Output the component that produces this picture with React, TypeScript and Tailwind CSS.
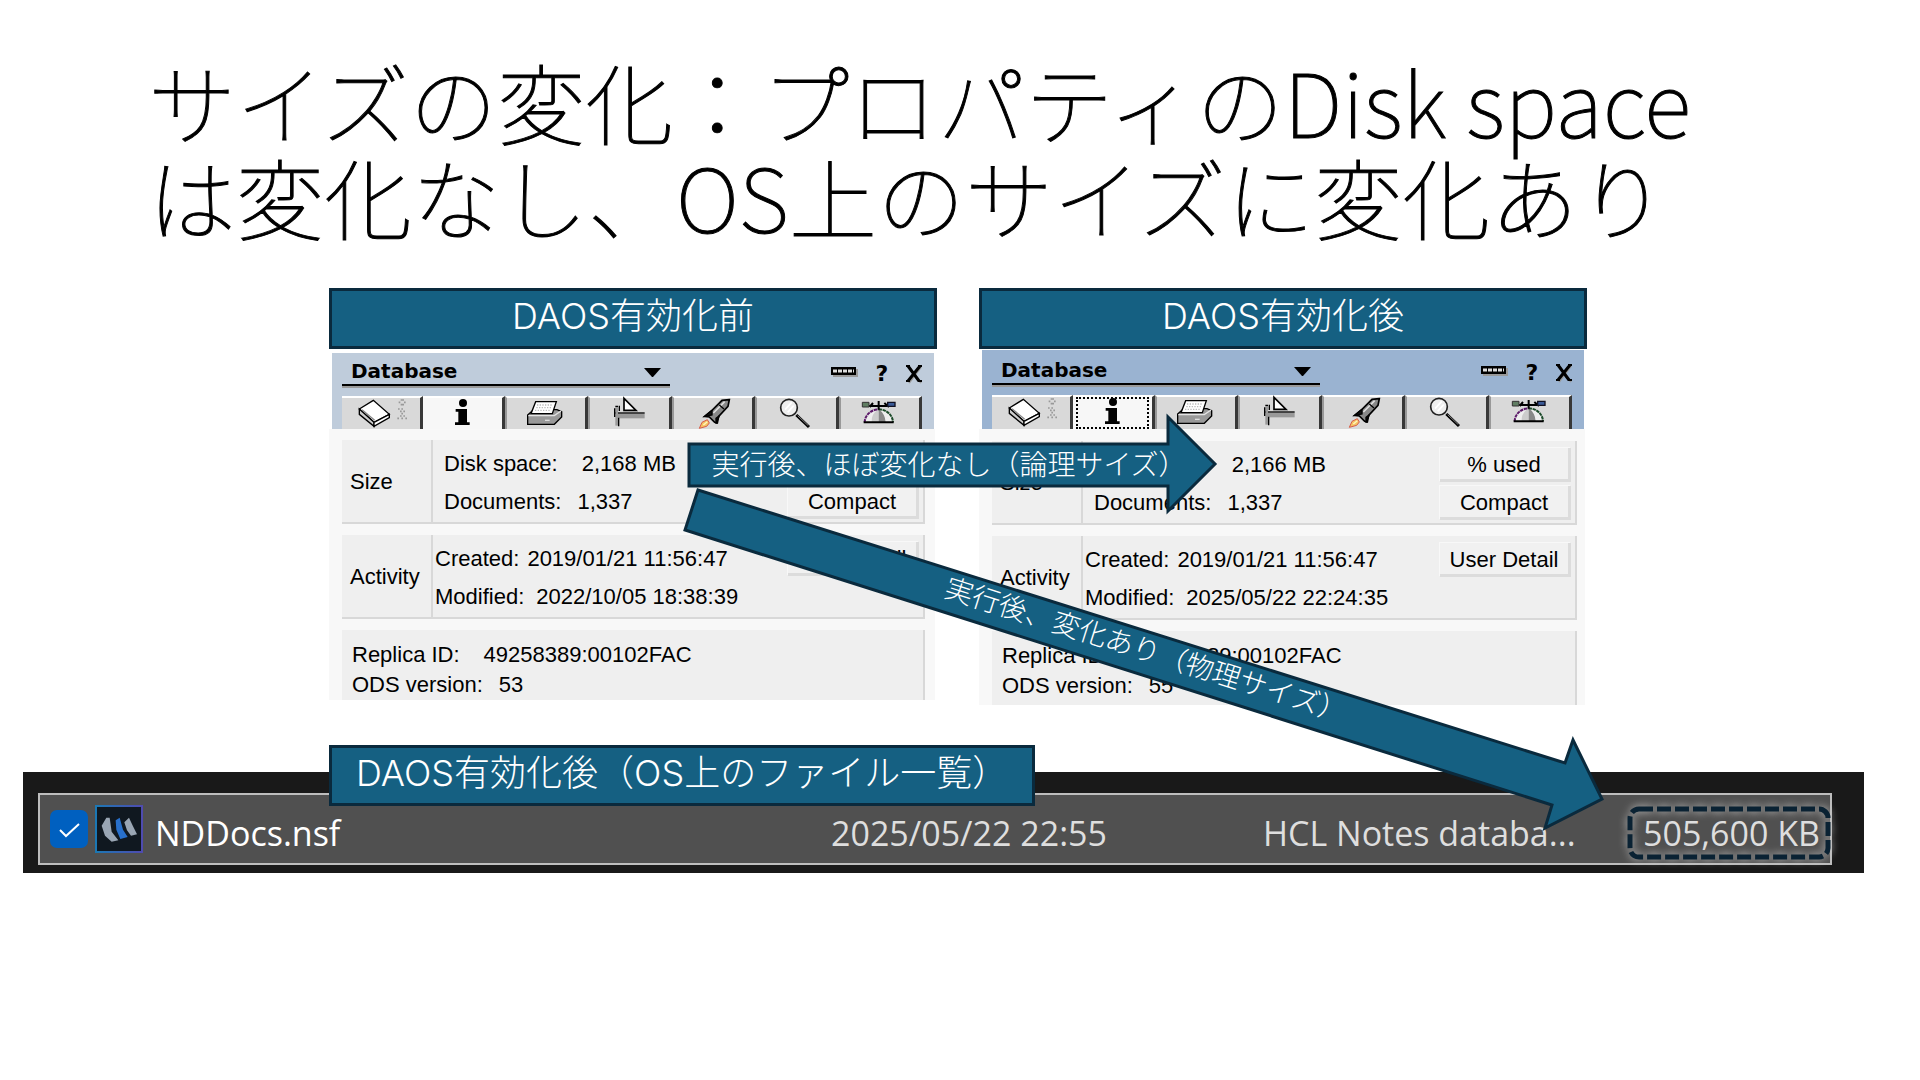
import React from 'react';

interface PropertyBoxData {
  id: string;
  heading: string;
  focused: boolean;
  diskSpace: string;
  modified: string;
  odsVersion: string;
}

const boxes: PropertyBoxData[] = [
  {
    id: 'before',
    heading: 'DAOS有効化前',
    focused: false,
    diskSpace: '2,168 MB',
    modified: '2022/10/05 18:38:39',
    odsVersion: '53'
  },
  {
    id: 'after',
    heading: 'DAOS有効化後',
    focused: true,
    diskSpace: '2,166 MB',
    modified: '2025/05/22 22:24:35',
    odsVersion: '55'
  }
];

const tabs = [
  {
    name: 'General',
    icon: (
      <>
        <path d="M52 42 L94 16 L142 58 L96 82 Z" fill="#fff" stroke="#000" strokeWidth="4" />
        <path d="M52 42 L52 58 L96 94 L96 82 Z" fill="#ccc" stroke="#000" strokeWidth="4" />
        <path d="M96 82 L96 94 L142 68 L142 58 Z" fill="#fff" stroke="#000" strokeWidth="4" />
        <path d="M60 44 L98 76" stroke="#888" strokeWidth="4" />
        <path d="M176 15h10M170 22h5M186 22h5M176 29h10M168 42h5M178 42h5M174 49h5M184 49h5M178 56h5M174 63h5M184 63h5M166 70h5M178 70h5M190 70h5" stroke="#999" strokeWidth="5" />
      </>
    )
  },
  {
    name: 'Info',
    icon: (
      <>
        <circle cx="120" cy="24" r="12" />
        <path d="M98 42 H132 V82 H140 V90 H96 V82 H106 V50 H98 Z" />
      </>
    )
  },
  {
    name: 'Printing',
    icon: (
      <>
        <path d="M62 60 L80 44 L150 44 L164 50 L164 66 L142 88 L62 88 Z" fill="#999" stroke="#000" strokeWidth="4" />
        <path d="M86 20 L148 20 L136 56 L72 56 Z" fill="#fff" stroke="#000" strokeWidth="4" />
        <path d="M90 30h48M88 38h46M84 46h48" stroke="#bbb" strokeWidth="4" strokeDasharray="4 4" />
        <path d="M64 62 H142 L162 48" fill="none" stroke="#e4e4e4" strokeWidth="4" />
        <path d="M114 76h14" stroke="#ddd" strokeWidth="4" />
      </>
    )
  },
  {
    name: 'Design',
    icon: (
      <>
        <path d="M102 10 L138 46 L102 46 Z" fill="#fff" stroke="#000" strokeWidth="5" />
        <path d="M84 56h80v14H84z" fill="#999" />
        <path d="M72 54h92" stroke="#000" strokeWidth="4" />
        <path d="M80 36v56" stroke="#999" strokeWidth="8" />
        <path d="M88 32v16M86 68v26M74 40v26M84 34h-8" fill="none" stroke="#000" strokeWidth="4" />
      </>
    )
  },
  {
    name: 'Launch',
    icon: (
      <>
        <path d="M166 14 L144 16 L112 48 L92 64 L106 66 L122 82 L130 84 L134 64 L162 34 Z" fill="#888" stroke="#000" strokeWidth="5" />
        <path d="M152 20 L118 54" stroke="#ddd" strokeWidth="5" />
        <path d="M136 30l14 12M92 64l22-18v14zM126 86l10-24-10 8z" fill="#111" stroke="#000" strokeWidth="4" />
        <path d="M76 100 L84 82 L100 74 L106 84 L98 94 Z" fill="#f5c463" stroke="#d65a4a" strokeWidth="3" />
        <path d="M88 90l12-10" stroke="#fff6c0" strokeWidth="4" />
      </>
    )
  },
  {
    name: 'Search',
    icon: (
      <>
        <circle cx="96" cy="38" r="25" fill="#eee" stroke="#222" strokeWidth="5" />
        <path d="M84 44l20-22M92 52l18-20" stroke="#fff" strokeWidth="5" />
        <path d="M118 60 L156 96" stroke="#000" strokeWidth="9" />
        <path d="M122 62 L154 92" stroke="#888" strokeWidth="3" />
      </>
    )
  },
  {
    name: 'Advanced',
    icon: (
      <>
        <path d="M70 84 A43 42 0 0 1 156 84 Z" fill="#eee" />
        <path d="M113 43 A43 42 0 0 0 92 82 H113 Z" fill="#ccc" />
        <path d="M113 43 Q132 56 134 82 H113 Z" fill="#888" />
        <path d="M71 82 A43 40 0 0 1 113 43" fill="none" stroke="#5b1a68" strokeWidth="6" strokeDasharray="10 2" />
        <path d="M113 43 A43 40 0 0 1 156 82" fill="none" stroke="#1c4b2a" strokeWidth="6" strokeDasharray="10 2" />
        <path d="M68 82h90M80 33h68M113 18v26M96 24l-10 12M130 24l14 12" fill="none" stroke="#000" strokeWidth="6" />
        <path d="M64 22h20v14H64z" fill="#5f7d62" stroke="#333" strokeWidth="3" />
        <path d="M140 22h22v12h-22z" fill="#3b5b98" stroke="#112" strokeWidth="4" />
      </>
    )
  }
];

function Banner({ children }: { children: React.ReactNode }) {
  return (
    <h2 className="h-[61px] border-3 border-[#0a2a3d] bg-[#156082] px-6 text-center font-['Inter','Noto_Sans_CJK_JP',sans-serif] text-[36px] leading-[50px] font-light text-white">
      {children}
    </h2>
  );
}

function Row({ label, value, gap, children }: { label: string; value: string; gap: string; children?: React.ReactNode }) {
  return (
    <div className="flex h-[38px] items-center justify-between">
      <dl className={`flex whitespace-pre ${gap}`}>
        <dt>{label}</dt>
        <dd>{value}</dd>
      </dl>
      {children}
    </div>
  );
}

function PanelButton({ children }: { children: React.ReactNode }) {
  return (
    <button className="mr-1 h-[34px] w-[131px] border-r-3 border-b-3 border-[#dcdcdc] bg-[#f1f1f1] pt-[3px] leading-[28px] shadow-[-1px_-1px_0_#f8f8f8]">
      {children}
    </button>
  );
}

function Group({ title, inset, children }: { title: string; inset: string; children: React.ReactNode }) {
  return (
    <section className="flex h-[84px] border-r-2 border-b-2 border-[#d8d8d8] bg-[#efefef]">
      <h3 className="flex w-[91px] items-center border-r-2 border-[#d8d8d8] pt-[2px] pl-2">{title}</h3>
      <div className={`flex-1 pt-[5px] ${inset}`}>{children}</div>
    </section>
  );
}

function PropertyBox({ box }: { box: PropertyBoxData }) {
  return (
    <div className="font-['Liberation_Sans',sans-serif] text-[22px] leading-[30px] text-black">
      <div className={`mr-[3px] ml-[3px] flex flex-col justify-end pl-[10px] ${box.focused ? 'mt-px h-[79px] bg-[#9ab3d1]' : 'mt-1 h-[76px] bg-[#bfccdb]'}`}>
        <div className="mb-[9px] flex w-[580px] items-center justify-between">
          <div className="relative w-[328px]">
            <select
              aria-label="Properties of"
              className="block h-[31px] w-full appearance-none border-b-2 border-black bg-transparent pt-[3px] pl-[9px] font-['DejaVu_Sans',sans-serif] text-[20px] leading-[26px] font-bold shadow-[0_2px_0_#9a9a9a]"
            >
              <option>Database</option>
            </select>
            <svg className="pointer-events-none absolute top-[13px] right-[9px] h-[9px] w-[17px]" viewBox="0 0 17 9">
              <path d="M0 0h17L9 9H8z" />
            </svg>
          </div>
          <div className="flex items-center gap-4 pt-1">
            <button aria-label="Collapse">
              <svg className="h-[10px] w-[27px]" viewBox="0 0 27 10">
                <path d="M2 2h25v8H2z" fill="#999" />
                <path d="M0 0h25v8H0z" />
                <path d="M2 4h21" stroke="#ddd" strokeWidth="3" strokeDasharray="4 1" />
              </svg>
            </button>
            <button aria-label="Help" className="w-4 pt-1 font-['DejaVu_Sans',sans-serif] text-[22px] leading-[26px] font-bold">?</button>
            <button aria-label="Close">
              <svg className="mt-1 h-5 w-4" viewBox="0 0 16 20">
                <path d="M3 3l12 16M15 3L3 19" stroke="#999" strokeWidth="2" />
                <path d="M2 2l11 15M14 2L2 17" stroke="#000" strokeWidth="3" />
                <path d="M0 2h4M12 2h4M0 17h4M12 17h4" stroke="#000" strokeWidth="2" />
              </svg>
            </button>
          </div>
        </div>
        <div role="tablist" className="flex h-[34px] w-[580px]">
          {tabs.map((tab, index) => {
            const active = index === 1;
            return (
              <button
                key={tab.name}
                role="tab"
                aria-selected={active}
                aria-label={tab.name}
                className={`relative flex-1 border-t-2 border-r-3 border-t-white border-r-[#383838] ${
                  active ? 'bg-[#f7f7f7]' : 'bg-[#d9d9d9]'
                } ${index > 1 ? 'border-l-2 border-l-[#999]' : ''}`}
              >
                <svg className="absolute top-0 left-0 -mt-[3px] h-[34px] w-[83px] overflow-hidden" viewBox="0 0 249 102">
                  {tab.icon}
                </svg>
                {active && box.focused && <span className="absolute inset-x-[3px] top-0 bottom-0 border-2 border-dotted border-black" />}
              </button>
            );
          })}
        </div>
      </div>

      <div className={`mr-[2px] space-y-[11px] bg-[#f8f8f8] pl-[13px] ${box.focused ? 'pt-3 pr-[8px]' : 'pt-[11px] pr-[10px]'}`}>
        <Group title="Size" inset="pl-[11px]">
          <Row label="Disk space:" value={box.diskSpace} gap="gap-6">
            <PanelButton>% used</PanelButton>
          </Row>
          <Row label="Documents:" value="1,337" gap="gap-4">
            <PanelButton>Compact</PanelButton>
          </Row>
        </Group>
        <Group title="Activity" inset="pl-[2px]">
          <Row label="Created:" value="2019/01/21 11:56:47" gap="gap-2">
            <PanelButton>User Detail</PanelButton>
          </Row>
          <Row label="Modified:" value={box.modified} gap="gap-3" />
        </Group>
        <section className={`border-r-2 border-[#d8d8d8] bg-[#efefef] pt-[10px] pl-[10px] ${box.focused ? 'h-[74px]' : 'h-[70px]'}`}>
          <dl className="flex gap-6">
            <dt>Replica ID:</dt>
            <dd>49258389:00102FAC</dd>
          </dl>
          <dl className="flex gap-4">
            <dt>ODS version:</dt>
            <dd>{box.odsVersion}</dd>
          </dl>
        </section>
      </div>
    </div>
  );
}

function Arrows() {
  return (
    <svg
      className="pointer-events-none absolute top-0 left-0 z-20 h-[560px] w-[1290px] overflow-visible"
      viewBox="329 288 1290 560"
      fill="#156082"
      stroke="#0a2a3d"
      strokeWidth="3"
    >
      <path d="M689 444 H1168 V417 L1215 464 L1168 511 V486 H689 Z" />
      <path d="M698 490 L1565 763 L1573 740 L1602 799 L1545 828 L1552 805 L685 530 Z" />
      <g fill="#fff" stroke="none" fontSize="28" fontWeight="300" textAnchor="middle">
        <text x="949" y="475">実行後、ほぼ変化なし（論理サイズ）</text>
        <text transform="translate(1146 650) rotate(17.5)" x="0" y="10">実行後、変化あり（物理サイズ）</text>
      </g>
    </svg>
  );
}

function FileList() {
  return (
    <div className="-mt-[34px] mr-[56px] ml-[23px] bg-[#191919] pt-[21px] pr-8 pb-2 pl-[15px]">
      <table className="h-[72px] w-full table-fixed border-separate border-spacing-0 border-2 border-[#bdbdbd] bg-[#505050] text-left font-['Open_Sans',sans-serif] text-[34px] leading-[48px] text-[#dedede]">
        <tbody>
          <tr>
            <td className="p-0">
              <div className="flex items-center pl-[10px]">
                <label className="relative mr-[7px] flex">
                  <input
                    type="checkbox"
                    defaultChecked
                    aria-label="NDDocs.nsf"
                    className="size-[38px] appearance-none rounded-[7px] bg-[#0060c0]"
                  />
                  <svg className="pointer-events-none absolute inset-0 size-[38px]" viewBox="0 0 38 38">
                    <path d="M10 20 L16 26 L29 14" fill="none" stroke="#fff" strokeWidth="2" />
                  </svg>
                </label>
                <svg className="mr-3 size-12" viewBox="0 0 144 144">
                  <defs>
                    <linearGradient id="frame" x1="0" x2="1">
                      <stop offset="0" stopColor="#1b78b4" />
                      <stop offset="1" stopColor="#4f4bb0" />
                    </linearGradient>
                  </defs>
                  <rect x="3" y="3" width="138" height="138" fill="#101820" stroke="url(#frame)" strokeWidth="6" />
                  <path d="M20 62 L34 38 L44 38 L50 80 L70 106 L50 110 L30 92 Z" fill="#9aa6b4" />
                  <path d="M62 46 L74 38 L84 74 L98 96 L76 102 L64 74 Z" fill="#2870cc" />
                  <path d="M88 52 L102 38 L114 64 L126 88 L108 92 L96 76 Z" fill="#9aa6b4" />
                </svg>
                <span className="pt-2 text-white">NDDocs.nsf</span>
              </div>
            </td>
            <td className="w-[432px] p-0 pt-2">2025/05/22 22:55</td>
            <td className="w-[365px] p-0 pt-2">HCL Notes databa...</td>
            <td className="relative w-[202px] p-0 pt-2 pl-[15px] whitespace-nowrap">
              505,600 KB
              <svg className="absolute top-[10px] left-0 h-[56px] w-[206px] overflow-visible drop-shadow-[0_0_4px_#c8c8c8]" viewBox="0 0 206 56">
                <rect x="2" y="4" width="198" height="48" rx="9" fill="none" stroke="#0a2233" strokeWidth="5" strokeDasharray="14 4" />
              </svg>
            </td>
          </tr>
        </tbody>
      </table>
    </div>
  );
}

export default function App() {
  return (
    <main lang="ja" className="min-h-screen overflow-x-hidden bg-white pt-[52px] font-['Noto_Sans_CJK_JP',sans-serif]">
      <h1 className="px-[148px] text-[88px] leading-[95px] font-thin text-black [-webkit-text-stroke:1px_black]">
        サイズの変化：プロパティのDisk spaceは変化なし、OS上のサイズに変化あり
      </h1>

      <div className="mt-[46px] pr-1">
        <div className="relative mx-auto grid max-w-[1258px] grid-cols-2 items-start gap-[42px]">
          {boxes.map((box) => (
            <section key={box.id}>
              <Banner>{box.heading}</Banner>
              <PropertyBox box={box} />
            </section>
          ))}
          <Arrows />
        </div>
        <div className="relative z-10 mx-auto mt-10 flex max-w-[1258px]">
          <Banner>DAOS有効化後（OS上のファイル一覧）</Banner>
        </div>
      </div>
      <FileList />
    </main>
  );
}
